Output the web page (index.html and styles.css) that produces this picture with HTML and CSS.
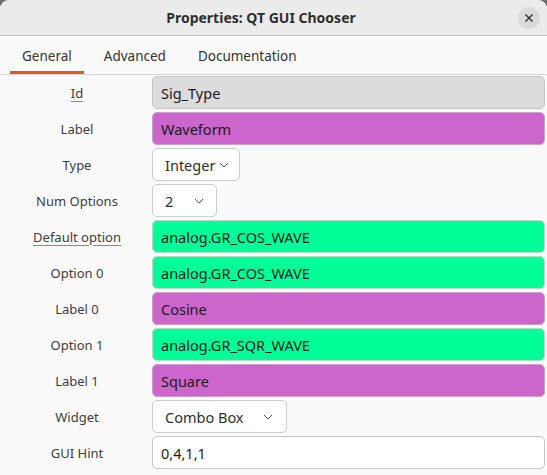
FILE: index.html
```html
<!DOCTYPE html>
<html>
<head>
<meta charset="utf-8">
<link rel="stylesheet" href="styles.css">
</head>
<body>
<div class="window">
  <div class="titlebar">
    <div class="title">Properties: QT GUI Chooser</div>
    <div class="close">
      <svg width="10" height="10" viewBox="0 0 10 10"><path d="M1.5 1.5 L8.5 8.5 M8.5 1.5 L1.5 8.5" stroke="#2e2e2e" stroke-width="1.4" fill="none"/></svg>
    </div>
  </div>
  <div class="tabs">
    <div class="tab active">General</div>
    <div class="tab">Advanced</div>
    <div class="tab">Documentation</div>
  </div>
  <div class="form">
    <div class="lbl"><span class="ul">Id</span></div>
    <div class="field gray">Sig_Type</div>

    <div class="lbl">Label</div>
    <div class="field magenta">Waveform</div>

    <div class="lbl">Type</div>
    <div class="combo w-type"><span>Integer</span><svg class="chev" width="10" height="6" viewBox="0 0 10 6"><path d="M1 1 L5 5 L9 1" stroke="#555" stroke-width="1" fill="none"/></svg></div>

    <div class="lbl">Num Options</div>
    <div class="combo w-num"><span>2</span><svg class="chev" width="10" height="6" viewBox="0 0 10 6"><path d="M1 1 L5 5 L9 1" stroke="#555" stroke-width="1" fill="none"/></svg></div>

    <div class="lbl"><span class="ul">Default option</span></div>
    <div class="field green">analog.GR_COS_WAVE</div>

    <div class="lbl">Option 0</div>
    <div class="field green">analog.GR_COS_WAVE</div>

    <div class="lbl">Label 0</div>
    <div class="field magenta">Cosine</div>

    <div class="lbl">Option 1</div>
    <div class="field green">analog.GR_SQR_WAVE</div>

    <div class="lbl">Label 1</div>
    <div class="field magenta">Square</div>

    <div class="lbl">Widget</div>
    <div class="combo w-widget"><span>Combo Box</span><svg class="chev" width="10" height="6" viewBox="0 0 10 6"><path d="M1 1 L5 5 L9 1" stroke="#555" stroke-width="1" fill="none"/></svg></div>

    <div class="lbl">GUI Hint</div>
    <div class="field white">0,4,1,1</div>
  </div>
</div>
</body>
</html>
```

FILE: styles.css
```css
html, body {
  margin: 0;
  padding: 0;
  background: #6f6f6f;
  height: 100%;
  overflow: hidden;
}
.window {
  height: 100%;
  background: #fafafa;
  border-radius: 9px 9px 0 0;
  overflow: hidden;
  font-family: "Noto Sans", "Open Sans", sans-serif;
}
.titlebar {
  height: 35px;
  background: #ebebeb;
  border-bottom: 1px solid #c2c2c2;
  display: flex;
  align-items: center;
  justify-content: center;
  position: relative;
}
.title {
  font-weight: bold;
  font-size: 14px;
  color: #2e2e2e;
  padding-right: 25px;
}
.close {
  position: absolute;
  right: 7px;
  top: 7px;
  width: 22px;
  height: 22px;
  border-radius: 50%;
  background: #dadada;
  display: flex;
  align-items: center;
  justify-content: center;
}
.tabs {
  height: 38px;
  display: flex;
  padding-left: 10px;
  border-bottom: 1px solid #d4d4d4;
  background: #fafafa;
}
.tab {
  font-size: 13.5px;
  color: #333;
  padding: 5px 12px 0 12px;
  display: flex;
  align-items: center;
  margin-right: 8px;
  border-bottom: 3px solid transparent;
}
.tab.active {
  border-bottom-color: #e95420;
}
.form {
  display: grid;
  grid-template-columns: 152px 1fr;
  grid-auto-rows: 33px;
  row-gap: 3px;
  padding: 1px 2px 0 0;
}
.lbl {
  display: flex;
  align-items: center;
  justify-content: center;
  font-size: 13px;
  color: #3d3d3d;
  padding-left: 2px;
}
.ul {
  text-decoration: underline;
  text-decoration-color: #8a8a8a;
  text-underline-offset: 3px;
}
.field {
  border: 1px solid #c6c6c6;
  border-radius: 5px;
  display: flex;
  align-items: center;
  padding-left: 8px;
  font-size: 14.5px;
  color: #1b1b1b;
  box-sizing: border-box;
}
.gray { background: #dcdcdc; }
.magenta { background: #cc66cc; border-color: #c9a3c9; }
.green { background: #00ff99; border-color: #b9dcc9; }
.white { background: #ffffff; }
.combo {
  border: 1px solid #cdcdcd;
  border-radius: 5px;
  background: #ffffff;
  display: flex;
  align-items: center;
  justify-content: space-between;
  padding: 0 12px 0 12px;
  font-size: 14.5px;
  color: #2e2e2e;
  box-sizing: border-box;
  justify-self: start;
}
.w-type { width: 88px; padding-right: 10px; }
.w-num { width: 65px; }
.w-widget { width: 135px; padding-right: 13px; }
.chev { display: block; }
```
